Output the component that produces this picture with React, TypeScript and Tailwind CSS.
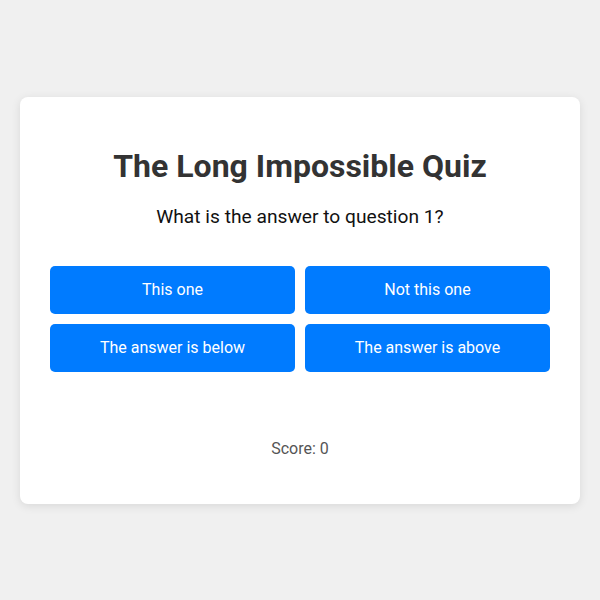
import React, { FC, useState } from "react"

const answers = ["This one", "Not this one", "The answer is below", "The answer is above"]

const App: FC = () => {
  const [score, setScore] = useState(0)

  return (
    <div className="min-h-screen w-full bg-[#f0f0f0] flex items-center justify-center font-['Roboto',sans-serif]">
      <div className="w-[560px] bg-white rounded-lg shadow-[0_2px_10px_rgba(0,0,0,0.1)] p-[30px] text-center">
        <h1 className="mt-[21px] mb-[21px] text-[32px] leading-[37px] font-bold text-[#333]">
          The Long Impossible Quiz
        </h1>
        <p className="text-[19.2px] leading-[22px] text-[#111]">What is the answer to question 1?</p>
        <div className="mt-[38px] grid grid-cols-2 gap-[10px]">
          {answers.map((answer, index) => (
            <button
              key={index}
              className="h-[48px] rounded-[5px] bg-[#007bff] text-white text-[16px]"
              onClick={() => setScore(score)}
            >
              {answer}
            </button>
          ))}
        </div>
        <div className="mt-[67px] mb-[16px] text-[16px] leading-[19px] text-[#555]">Score: {score}</div>
      </div>
    </div>
  )
}

export default App
